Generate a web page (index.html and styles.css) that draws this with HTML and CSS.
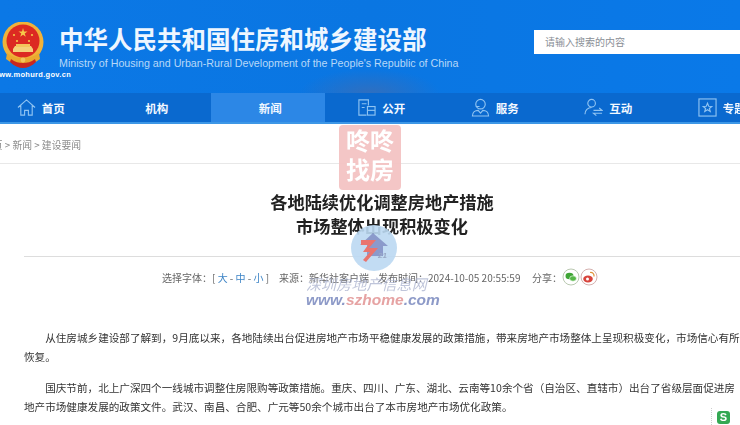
FILE: index.html
```html
<!DOCTYPE html>
<html lang="zh">
<head>
<meta charset="utf-8">
<title>各地陆续优化调整房地产措施</title>
<link rel="stylesheet" href="styles.css">
</head>
<body>
<div class="page">
  <header class="top">
    <svg class="emblem" viewBox="0 0 44 48" width="44" height="48">
      <circle cx="22" cy="20" r="20.5" fill="#f0b23a"/>
      <circle cx="22" cy="19" r="16.5" fill="#dc2a22"/>
      <polygon points="22,6 23,9.4 26.5,9.4 23.7,11.4 24.8,14.8 22,12.7 19.2,14.8 20.3,11.4 17.5,9.4 21,9.4" fill="#f6c94a"/>
      <circle cx="13" cy="13" r="1.1" fill="#f6c94a"/><circle cx="31" cy="13" r="1.1" fill="#f6c94a"/>
      <circle cx="16" cy="19" r="1.1" fill="#f6c94a"/><circle cx="28" cy="19" r="1.1" fill="#f6c94a"/>
      <path d="M14 24h16l2 3v3H12v-3z" fill="#f5d27a"/>
      <rect x="15" y="22" width="14" height="3" fill="#f3c65c"/>
      <path d="M6 31c5 4 11 5 16 5s11-1 16-5l1 6c-5 4-11 6-17 6S10 41 5 37z" fill="#e9a92f"/>
      <path d="M10 37c4 3 8 4 12 4s8-1 12-4l1 3c-4 4-9 6-13 6s-9-2-13-6z" fill="#c9281f"/>
      <circle cx="22" cy="38" r="2.4" fill="#f3c65c"/>
    </svg>
    <p class="url">www.mohurd.gov.cn</p>
    <div class="brand">
      <h1 class="brand-cn">中华人民共和国住房和城乡建设部</h1>
      <p class="brand-en">Ministry of Housing and Urban-Rural Development of the People's Republic of China</p>
    </div>
    <div class="search">请输入搜索的内容</div>
  </header>
  <nav class="nav">
    <a class="nav-item">
      <svg class="ico" viewBox="0 0 20 20"><path d="M1 10 10 2l9 8M4 8v10h4v-5h4v5h4V8"/></svg>首页</a>
    <a class="nav-item plain">机构</a>
    <a class="nav-item plain active">新闻</a>
    <a class="nav-item">
      <svg class="ico" viewBox="0 0 20 20"><path d="M10 18H2V2h10v6M5 6h5M5 10h3"/><rect x="11" y="9" width="8" height="9"/><path d="M11 13h8"/></svg>公开</a>
    <a class="nav-item">
      <svg class="ico" viewBox="0 0 20 20"><circle cx="10" cy="6.5" r="5"/><path d="M5 9h4M1.500 19c0-4 3-6 6-6l2.500 3 2.500-3c3 0 6 2 6 6z"/></svg>服务</a>
    <a class="nav-item">
      <svg class="ico" viewBox="0 0 20 20"><circle cx="8" cy="5.500" r="4"/><path d="M1 17c0-4 3-7 7-7M10 13h9l-3-2.500M19 16h-9l3 2.500"/></svg>互动</a>
    <a class="nav-item">
      <svg class="ico" viewBox="0 0 20 20"><rect x="1" y="1" width="18" height="18"/><polygon points="10,5.500 11.300,8.700 14.500,8.900 12,11 12.900,14.200 10,12.400 7.100,14.200 8,11 5.500,8.900 8.700,8.700"/></svg>专题</a>
  </nav>
  <main class="main">
    <div class="crumbs">首页 &gt; 新闻 &gt; 建设要闻</div>
    <article class="article">
      <h2 class="title">各地陆续优化调整房地产措施<br>市场整体出现积极变化</h2>
      <div class="meta">
        <span class="meta-font">选择字体：[ <b>大</b> - <b>中</b> - <b>小</b> ]</span>
        <span class="meta-src">来源：新华社客户端</span>
        <span class="meta-time">发布时间：2024-10-05 20:55:59</span>
        <span class="meta-share">分享：</span>
        <svg class="share" viewBox="0 0 18 18" width="18" height="18"><circle cx="9" cy="9" r="8" fill="#fff" stroke="#b9c8b0"/><ellipse cx="7.500" cy="8" rx="4" ry="3.200" fill="#3fa535"/><ellipse cx="11" cy="10.500" rx="3.400" ry="2.700" fill="#56b848" stroke="#fff" stroke-width=".6"/></svg>
        <svg class="share" viewBox="0 0 18 18" width="18" height="18"><circle cx="9" cy="9" r="8" fill="#fff" stroke="#d4b0ae"/><ellipse cx="8" cy="11" rx="4.800" ry="3.400" fill="#d8443c"/><circle cx="7.500" cy="11" r="1.500" fill="#fff"/><path d="M10 4.500c2.500-.5 4.500 1.500 4 4" fill="none" stroke="#e0953a" stroke-width="1.200"/></svg>
      </div>
      <div class="body">
        <p>从住房城乡建设部了解到，9月底以来，各地陆续出台促进房地产市场平稳健康发展的政策措施，带来房地产市场整体上呈现积极变化，市场信心有所恢复。</p>
        <p>国庆节前，北上广深四个一线城市调整住房限购等政策措施。重庆、四川、广东、湖北、云南等10余个省（自治区、直辖市）出台了省级层面促进房地产市场健康发展的政策文件。武汉、南昌、合肥、广元等50余个城市出台了本市房地产市场优化政策。</p>
      </div>
    </article>
  </main>
  <div class="wm-red">咚咚<br>找房</div>
  <svg class="wm-logo" viewBox="0 0 46 46" width="46" height="46">
    <circle cx="23" cy="23" r="23" fill="#bcd9f2"/>
    <path d="M9 20 22 8l15 13h-5v10H16V20z" fill="#7f90c6"/>
    <path d="M10 15h15l-7 8h9l-12 14-3-2 7-8h-7l5-7h-7z" fill="#e8655f"/>
    <text x="27" y="33" class="wm-21">21</text>
  </svg>
  <div class="wm-text">
    <div class="wm-cn">深圳房地产信息网</div>
    <div class="wm-en"><span>www.</span><em>szhome</em><span>.com</span></div>
  </div>
  <div class="wm-s"><span class="wm-s-icon">S</span></div>
</div>
</body>
</html>
```
FILE: styles.css
```css
html, body { margin: 0; padding: 0; background: #fff; overflow: hidden; }
.page {
  position: relative;
  width: 740px;
  height: 425px;
  overflow: hidden;
  font-family: "Noto Sans CJK SC", "Liberation Sans", sans-serif;
  filter: blur(0.35px);
}
.top {
  position: relative;
  height: 93px;
  display: flex;
  background:
    radial-gradient(ellipse 70px 24px at 370px 93px, #2f6fc0 0, rgba(47,111,192,0) 100%),
    linear-gradient(90deg, #0b78e6 0%, #0a76e2 50%, #0a79e8 100%);
}
.emblem { position: absolute; left: 1px; top: 22px; }
.url {
  position: absolute; left: -7px; top: 70px; margin: 0;
  color: #fff; font: bold 7.500px/10px "Liberation Sans", sans-serif; letter-spacing: .3px;
}
.brand { margin-left: 59px; padding-top: 24px; width: 475px; flex: none; }
.brand-cn { margin: 0; color: #eef6ff; font-size: 24.500px; line-height: 30px; font-weight: 700; white-space: nowrap; }
.brand-en { margin: 2px 0 0; color: #b7d8f8; font: 10.700px/14px "Liberation Sans", sans-serif; white-space: nowrap; }
.search {
  margin-top: 30px; height: 24px; width: 206px; flex: none; box-sizing: border-box;
  background: #fff; color: #8a8f96; font-size: 10px; line-height: 24px; padding-left: 11px;
}
.nav {
  display: flex;
  height: 29px;
  margin-left: -16px;
  width: 780px;
  background: #0a69cf;
  border-bottom: 2px solid #3d97e6;
}
.nav-item {
  flex: 0 0 113.500px;
  display: flex; align-items: center; justify-content: center; gap: 6px;
  color: #f2f8ff; font-size: 11.500px; font-weight: 700;
}
.plain { padding-left: 5px; box-sizing: border-box; }
.active { background: #2c87e6; }
.ico { width: 19px; height: 19px; fill: none; stroke: #8fc3f2; stroke-width: 1.200; }
.main { display: block; }
.crumbs {
  margin-left: -17px; height: 39px; line-height: 42px;
  color: #8b8b8b; font-size: 9.800px; border-bottom: 1px solid #e8e8e8; white-space: nowrap;
}
.article { margin-left: 24px; width: 760px; }
.title {
  margin: 26px 0 0; padding: 0 0 18px; width: 716px; text-align: center;
  color: #222; font-size: 17.200px; line-height: 24px; font-weight: 700;
  border-bottom: 1px solid #ddd;
}
.meta { display: flex; align-items: center; height: 20px; margin: 10px 0 0 138px; color: #666; font-size: 10px; white-space: nowrap; }
.meta b { color: #3d84c6; font-weight: 400; }
.meta-font { width: 117px; flex: none; }
.meta-src { width: 99px; flex: none; }
.meta-time { width: 154px; flex: none; }
.meta-share { width: 30px; flex: none; }
.share { flex: none; }
.body { width: 717px; margin-top: 41px; color: #333; font-size: 10.600px; line-height: 19px; }
.body p { margin: 0 0 12px; text-indent: 2em; }
.wm-red {
  position: absolute; left: 339px; top: 125px; width: 62px; height: 65px;
  background: #f4c3c3; border-radius: 4px; color: #fff;
  font-size: 24px; line-height: 29px; font-weight: 700; text-align: center; opacity: .95; letter-spacing: 0;
}
.wm-logo { position: absolute; left: 351px; top: 225px; opacity: .9; }
.wm-21 { font: italic bold 8px "Liberation Sans", sans-serif; fill: #8fa0c0; }
.wm-text { position: absolute; left: 306px; top: 276px; width: 130px; }
.wm-cn { color: rgba(170,178,205,.75); font-size: 15px; line-height: 16px; font-style: italic; white-space: nowrap; letter-spacing: .1px; }
.wm-en { color: #8d9ac8; font: italic bold 15.500px/15px "Liberation Sans", sans-serif; white-space: nowrap; }
.wm-en em { color: #e6a3a3; }
.wm-s {
  position: absolute; left: 711px; top: 408px; width: 29px; height: 17px;
  border-left: 1px dotted #ccc; padding-left: 5px; box-sizing: border-box;
}
.wm-s-icon {
  display: block; width: 13px; height: 13px; margin-top: 3px; border-radius: 3px;
  background: #34a853; color: #fff; font: bold 11px/13px "Liberation Sans", sans-serif; text-align: center;
}
```
